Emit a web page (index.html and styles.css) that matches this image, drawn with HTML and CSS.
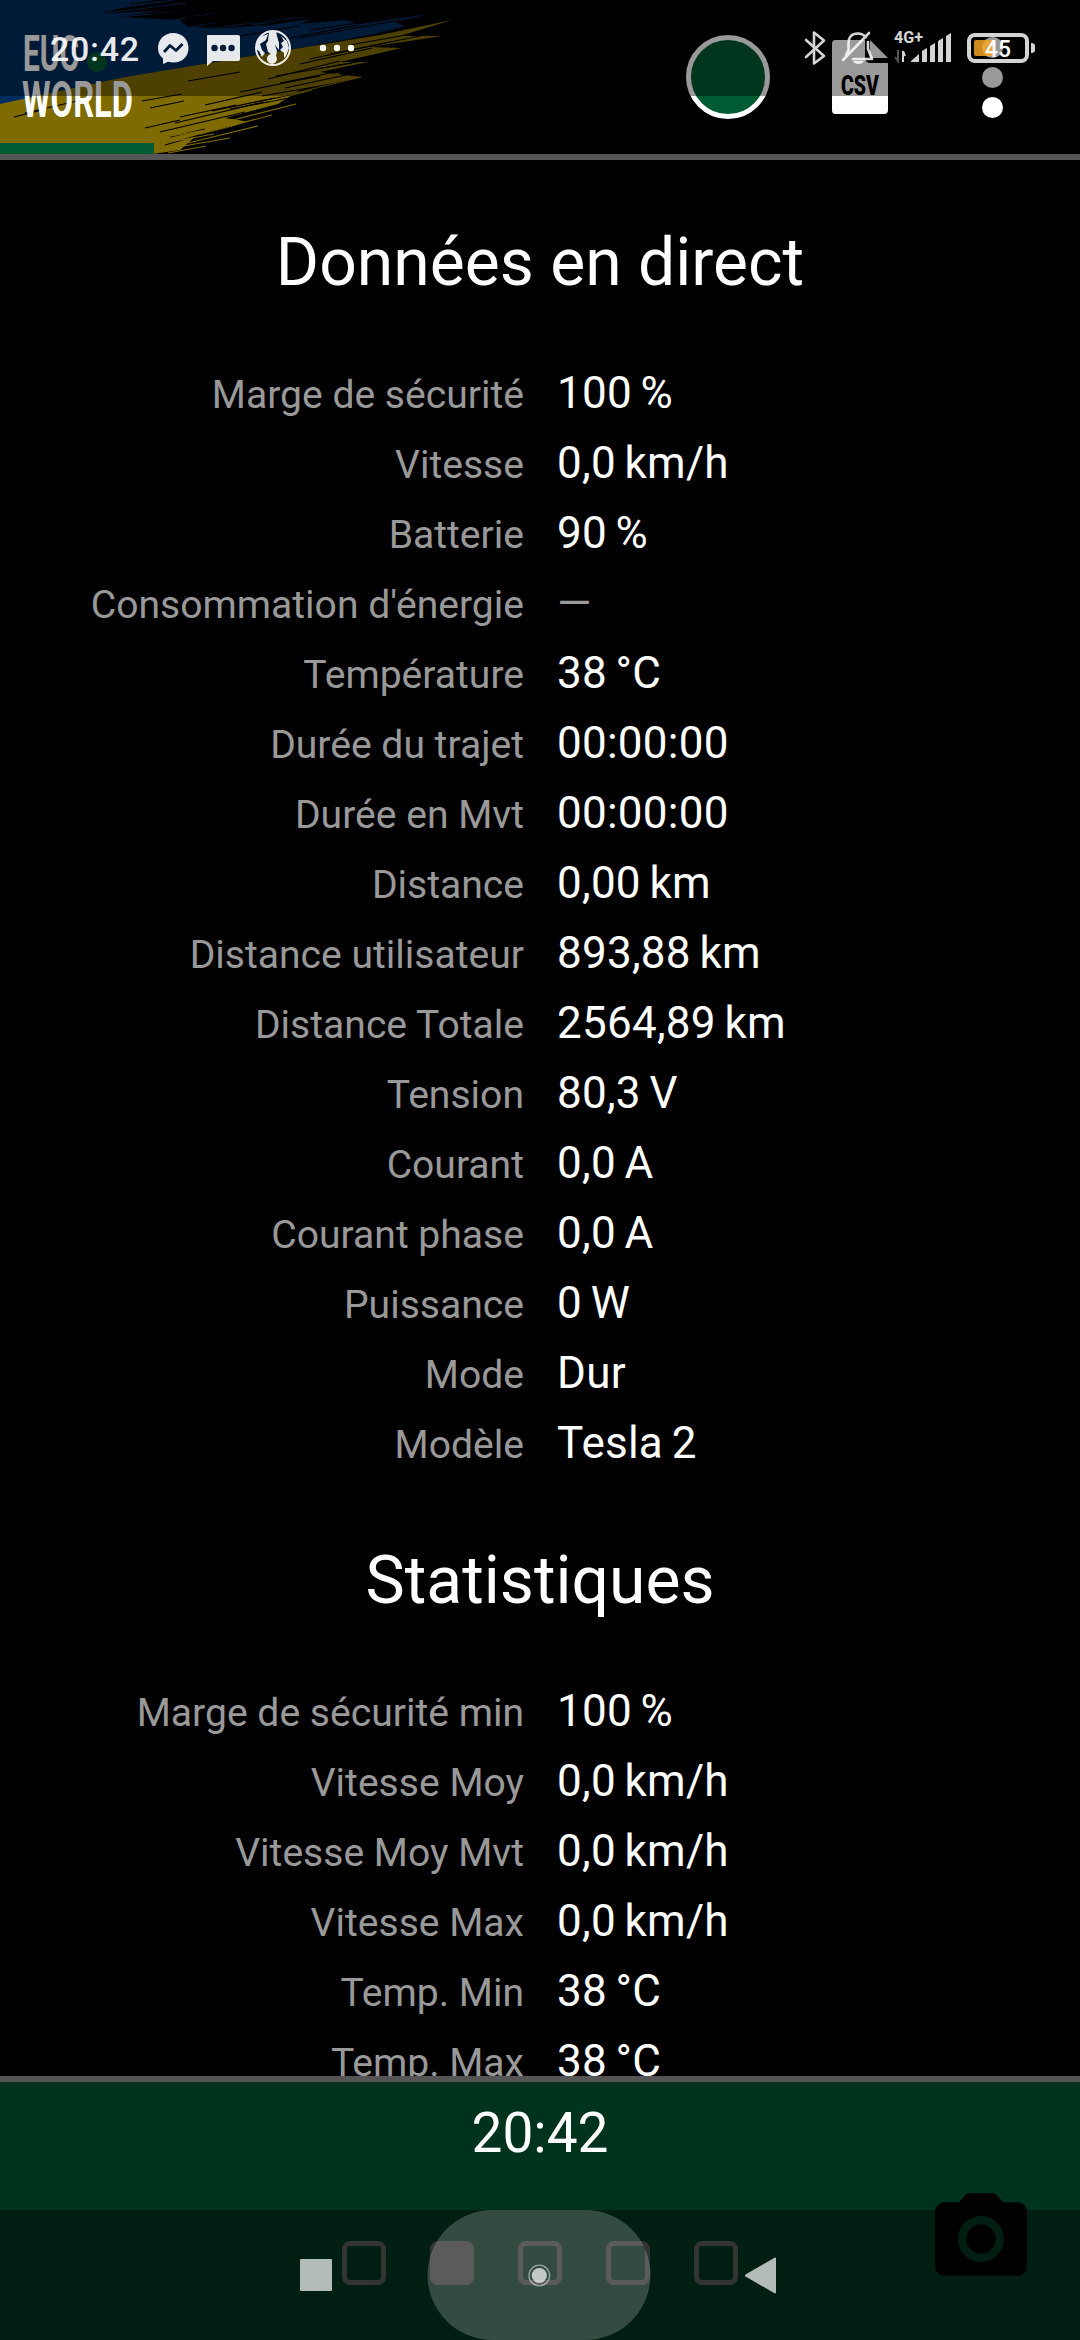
FILE: index.html
```
<!DOCTYPE html>
<html lang="fr">

<head>
  <meta charset="UTF-8">
  <meta name="viewport" content="width=device-width, initial-scale=1.0">
  <title>EUC World</title>
  <link rel="stylesheet" href="styles.css">
</head>

<body>
  <div class="screen">

    <header class="header">
      <!-- painted flag behind the logo -->
      <svg class="brush" width="460" height="154" viewBox="0 0 460 154">
        <path fill="#002d5e" d="M0 0H165L120 8 98 14 160 11 118 17 180 20 188 27 225 28 270 25 310 19 300 24 345 20 360 24 429 14 395 22 405 26 375 34 300 48 120 80 0 106Z"/>
        <path fill="#806b00" d="M0 104L120 78 300 48 380 35 452 20 400 36 442 36 370 47 402 48 340 62 368 62 320 72 362 77 300 90 278 104 225 118 250 122 196 136 180 150 153 154H0Z"/>
        <g class="blue-streaks">
          <path d="M112 9L200 -4M98 14L186 3M120 17L218 8M162 22L222 12M190 27L286 12M222 27L320 14M252 25L335 12"/>
        </g>
        <g class="dark-streaks">
          <path d="M170 2L260 -5M132 11L180 6M150 15L240 5M185 18L300 4M188 22L310 7M205 25L330 14M240 23L350 16"/>
          <path d="M130 4L178 -2M240 36L300 26M275 41L358 25M300 38L400 20M310 30L392 18"/>
          <path d="M188 81L240 72M300 64L372 48M310 59L390 42M322 68L380 58M268 79L340 61"/>
          <path d="M142 101L182 94M150 108L184 101M205 105L262 92M212 111L275 98M145 128L180 120M160 132L245 112M175 123L264 102M170 137L205 129M165 145L230 126M180 117L236 105"/>
          <path d="M25 113L90 98M14 117L46 109M285 88L360 72M262 96L355 80M255 102L330 88M230 109L300 96M240 92L320 76M280 83L365 66M276 76L352 63M330 54L420 36M350 45L434 30"/>
        </g>
        <path class="dark-fill" d="M190 10L280 3 420 -2V10L350 14 300 17 240 22 190 24 230 16Z"/>
        <path class="dark-fill" d="M183 154L205 136 240 124 278 110 300 94 365 85V154Z"/>
        <g class="gold-streaks">
          <path d="M136 142L206 130M142 147L214 134M160 150L230 138M168 153L206 146M188 143L258 126M200 134L272 115M225 122L296 104M270 101L312 90M292 94L361 77M282 86L340 73"/>
        </g>
      </svg>
      <svg class="logo" width="120" height="90" viewBox="0 0 120 90">
        <text x="2" y="42" textLength="56" lengthAdjust="spacingAndGlyphs">EUC</text>
        <text x="1" y="88" textLength="111" lengthAdjust="spacingAndGlyphs">WORLD</text>
        <circle cx="76" cy="33" r="10" fill="#005a32"/>
      </svg>
      <div class="header-actions">
        <div class="record"></div>
        <svg class="csv" width="56" height="74" viewBox="0 0 56 74">
          <path fill="#fff" d="M3 0H33V17Q33 23 39 23H56V70Q56 74 52 74H3Q0 74 0 70V4Q0 0 3 0ZM38 0L56 18H38Z"/>
          <text x="9" y="55" textLength="38" lengthAdjust="spacingAndGlyphs">CSV</text>
        </svg>
        <div class="more"><span></span><span></span><span></span></div>
      </div>
      <div class="progress"></div>
    </header>

    <main class="content">
      <h1 class="title">Données en direct</h1>
      <div class="list">
        <div class="label">Marge de sécurité</div><div class="value">100 %</div>
        <div class="label">Vitesse</div><div class="value">0,0 km/h</div>
        <div class="label">Batterie</div><div class="value">90 %</div>
        <div class="label">Consommation d'énergie</div><div class="value none">—</div>
        <div class="label">Température</div><div class="value">38 °C</div>
        <div class="label">Durée du trajet</div><div class="value">00:00:00</div>
        <div class="label">Durée en Mvt</div><div class="value">00:00:00</div>
        <div class="label">Distance</div><div class="value">0,00 km</div>
        <div class="label">Distance utilisateur</div><div class="value">893,88 km</div>
        <div class="label">Distance Totale</div><div class="value">2564,89 km</div>
        <div class="label">Tension</div><div class="value">80,3 V</div>
        <div class="label">Courant</div><div class="value">0,0 A</div>
        <div class="label">Courant phase</div><div class="value">0,0 A</div>
        <div class="label">Puissance</div><div class="value">0 W</div>
        <div class="label">Mode</div><div class="value">Dur</div>
        <div class="label">Modèle</div><div class="value">Tesla 2</div>
      </div>
      <h1 class="title">Statistiques</h1>
      <div class="list">
        <div class="label">Marge de sécurité min</div><div class="value">100 %</div>
        <div class="label">Vitesse Moy</div><div class="value">0,0 km/h</div>
        <div class="label">Vitesse Moy Mvt</div><div class="value">0,0 km/h</div>
        <div class="label">Vitesse Max</div><div class="value">0,0 km/h</div>
        <div class="label">Temp. Min</div><div class="value">38 °C</div>
        <div class="label">Temp. Max</div><div class="value">38 °C</div>
      </div>
    </main>

    <footer class="footer">
      <div class="clock">20:42</div>
      <div class="pages">
        <span class="page"></span>
        <span class="page active"></span>
        <span class="page"></span>
        <span class="page"></span>
        <span class="page"></span>
      </div>
      <svg class="camera" width="110" height="110" viewBox="0 0 24 24">
        <path d="M9 2L7.17 4H4c-1.1 0-2 .9-2 2v12c0 1.1.9 2 2 2h16c1.1 0 2-.9 2-2V6c0-1.1-.9-2-2-2h-3.17L15 2H9zm3 15c-2.76 0-5-2.24-5-5s2.24-5 5-5 5 2.24 5 5-2.24 5-5 5z"/>
        <circle cx="12" cy="12" r="3.2"/>
      </svg>
    </footer>

    <!-- system bars over the app -->
    <div class="status-bar">
      <div class="status-time">20:42</div>
      <svg class="status-icons" width="200" height="40" viewBox="155 28 200 40">
        <path fill="#fff" opacity=".9" d="M173.300 33C164.500 33 158 39.500 158 48C158 53 160 56 163 58.500V64L168 61.800C181 65 188.500 57 188.500 48C188.500 39.500 182 33 173.300 33Z"/>
        <path fill="none" stroke="#001a38" stroke-width="2.800" stroke-linejoin="round" d="M164 52L170 45.500 176 50.500 182.500 44"/>
        <path fill="#fff" opacity=".9" d="M208 35H238Q240 35 240 37V59Q240 61 238 61H213L207 66V36Q207 35 208 35Z"/>
        <g fill="#001a38"><circle cx="214.500" cy="48" r="3.200"/><circle cx="223" cy="48" r="3.200"/><circle cx="231.500" cy="48" r="3.200"/></g>
        <g opacity=".9">
          <circle cx="273" cy="48" r="17" fill="none" stroke="#fff" stroke-width="2"/>
          <path fill="#fff" d="M269 31L268 41 266 44 268 52 271 54A5 5 0 1 0 276 56L277 51 275 45 279 50 279 43 277 36 276 31ZM260 37L268 34 266 40 260 44 262 50 265 53 262 57 259 51 256 49 257 43ZM281 36L287 41 289 48 286 56 284 58 284 53 280 50 283 47 281 43 284 41Z"/>
        </g>
        <g fill="#fff"><circle cx="323" cy="48" r="3.200"/><circle cx="337" cy="48" r="3.200"/><circle cx="351" cy="48" r="3.200"/></g>
      </svg>
      <svg class="system-icons" width="240" height="40" viewBox="800 28 240 40">
        <g opacity=".83">
          <path fill="none" stroke="#fff" stroke-width="2.600" stroke-linejoin="round" stroke-linecap="round" d="M806 40L824 56 814 63.500V32.500L824 40.500 806 57"/>
          <path fill="none" stroke="#fff" stroke-width="2.600" stroke-linejoin="round" stroke-linecap="round" d="M866 37C863 34 861 33.500 858 33.500C851 33.500 848.500 38 848.500 43V50L846 55M868 42V49L872 59H853M843 60L869 33"/>
          <path fill="#fff" d="M852.500 61H864C863 63 861 64 858.500 64C856 64 854 63 852.500 61Z"/>
          <text class="network" x="894" y="43" textLength="29" lengthAdjust="spacingAndGlyphs">4G+</text>
          <path fill="none" stroke="#fff" stroke-width="2" d="M903 62V51L905 56"/>
          <path fill="none" stroke="#666" stroke-width="2" d="M898 50V61L895 57"/>
          <path fill="#fff" d="M911 62V61L919 54V62ZM922 62V51L927 48V62ZM930 62V46L935 43V62ZM938 62V41L943 38V62ZM946 62V36L951 33V62Z"/>
          <path fill="#fff" d="M1031 43Q1035 43 1035 46V50Q1035 53 1031 53Z"/>
          <rect x="969" y="35" width="58" height="26" rx="6" fill="none" stroke="#fff" stroke-width="4"/>
        </g>
        <path fill="#f5a623" opacity=".83" d="M976 40H995V56H976Q974 56 974 54V42Q974 40 976 40Z"/>
        <text class="battery" x="985" y="57" textLength="26" lengthAdjust="spacingAndGlyphs">45</text>
      </svg>
    </div>
    <svg class="nav-bar" width="1080" height="130" viewBox="0 0 1080 130">
      <rect x="427.500" y="0" width="223" height="130" rx="65" fill="#fff" opacity=".2"/>
      <g fill="#fff" opacity=".7">
        <rect x="300" y="49" width="32" height="32" rx="1"/>
        <circle cx="539.300" cy="65.500" r="7.600"/>
        <path d="M745.500 64.500L774.500 47.800Q776 47 776 49V82Q776 84 774.500 83.200L745.500 66.500Q744.500 65.500 745.500 64.500Z"/>
      </g>
      <circle cx="539.300" cy="65.500" r="10.300" fill="none" stroke="#fff" stroke-width="1.300" opacity=".5"/>
    </svg>

  </div>
</body>

</html>
```
FILE: styles.css
```
*,
*:before,
*:after {
  box-sizing: border-box;
}

body {
  margin: 0;
  background-color: black;
  color: white;
  font-family: Roboto, sans-serif;
}

svg {
  overflow: visible;
}

.screen {
  position: relative;
  display: flex;
  flex-direction: column;
  width: 1080px;
  height: 2340px;
  overflow: hidden;
}

/* header */
.header {
  position: relative;
  flex: none;
  display: flex;
  justify-content: space-between;
  height: 160px;
  padding: 35px 77px 0 21px;
  border-bottom: 6px solid #555;
}

.brush {
  position: absolute;
  top: 0;
  left: 0;
  overflow: hidden;
}

.blue-streaks,
.dark-streaks,
.gold-streaks {
  fill: none;
  stroke-width: 1.2;
}
.blue-streaks {
  stroke: #002d5e;
}
.dark-streaks {
  stroke: black;
}
.gold-streaks {
  stroke: #806b00;
}
.dark-fill {
  fill: black;
}

.logo {
  position: relative;
  margin-top: -6px;
  fill: white;
  font-size: 50px;
  font-weight: 700;
}

.header-actions {
  display: flex;
  align-items: flex-start;
}

.record {
  width: 84px;
  height: 84px;
  border: 5.5px solid white;
  border-radius: 50%;
  background-color: #005a32;
}

.csv {
  margin: 5px 94px 0 62px;
  font-size: 27px;
  font-weight: 900;
}

.more {
  display: flex;
  flex-direction: column;
  gap: 9px;
  padding-top: 2px;
}
.more span {
  width: 21px;
  height: 21px;
  border-radius: 50%;
  background-color: white;
}

.progress {
  position: absolute;
  left: 0;
  bottom: 0;
  width: 154px;
  height: 11px;
  background-color: #005a32;
}

/* data lists */
.content {
  flex: none;
  height: 1916px;
  padding-top: 54px;
  overflow: hidden;
}

.title {
  margin: 0;
  height: 144px;
  line-height: 98px;
  font-size: 66px;
  font-weight: 400;
  text-align: center;
}

.list {
  display: grid;
  grid-template-columns: 524px 1fr;
  grid-auto-rows: 70px;
  align-items: baseline;
  column-gap: 33px;
  margin-bottom: 54px;
}

.label {
  color: #999;
  font-size: 39.1px;
  line-height: 70px;
  text-align: right;
}

.value {
  font-size: 44px;
  line-height: 70px;
  letter-spacing: .25px;
  word-spacing: -2.5px;
  white-space: nowrap;
}
.none {
  color: #999;
}

/* footer */
.footer {
  position: relative;
  flex: none;
  display: flex;
  flex-direction: column;
  align-items: center;
  height: 264px;
  border-top: 6px solid #555;
  background-color: #00331d;
}

.clock {
  height: 159px;
  line-height: 102px;
  font-size: 55px;
}

.pages {
  display: flex;
  gap: 44px;
}
.page {
  width: 44px;
  height: 44px;
  border: 5px solid #555;
  border-radius: 8px;
}
.active {
  background-color: #555;
}

.camera {
  position: absolute;
  top: 102px;
  left: 926px;
}

/* system bars */
.status-bar {
  position: absolute;
  top: 0;
  left: 0;
  display: flex;
  align-items: flex-start;
  width: 1080px;
  height: 96px;
  padding: 28px 40px 0 50px;
  background-color: rgba(0, 0, 0, .4);
}

.status-time {
  width: 105px;
  line-height: 42px;
  font-size: 34px;
  font-weight: 500;
  letter-spacing: .7px;
  opacity: .9;
}

.system-icons {
  margin-left: auto;
}

.network {
  fill: white;
  font-size: 16px;
  font-weight: 700;
}
.battery {
  fill: white;
  font-size: 23px;
  font-weight: 500;
}

.nav-bar {
  position: absolute;
  left: 0;
  bottom: 0;
  background-color: rgba(0, 0, 0, .4);
}
```
